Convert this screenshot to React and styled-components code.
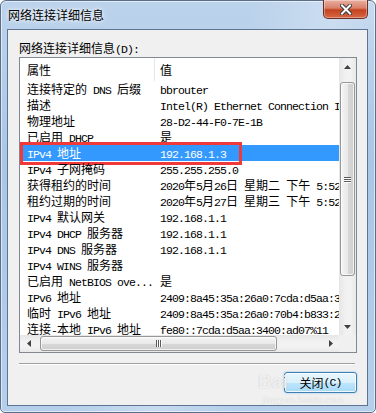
import React from "react";
import styled, { createGlobalStyle } from "styled-components";

const rows = [
  ["连接特定的 DNS 后缀", "bbrouter"],
  ["描述", "Intel(R) Ethernet Connection I219-V"],
  ["物理地址", "28-D2-44-F0-7E-1B"],
  ["已启用 DHCP", "是"],
  ["IPv4 地址", "192.168.1.3"],
  ["IPv4 子网掩码", "255.255.255.0"],
  ["获得租约的时间", "2020年5月26日 星期二 下午 5:52:09"],
  ["租约过期的时间", "2020年5月27日 星期三 下午 5:52:09"],
  ["IPv4 默认网关", "192.168.1.1"],
  ["IPv4 DHCP 服务器", "192.168.1.1"],
  ["IPv4 DNS 服务器", "192.168.1.1"],
  ["IPv4 WINS 服务器", ""],
  ["已启用 NetBIOS ove...", "是"],
  ["IPv6 地址", "2409:8a45:35a:26a0:7cda:d5aa:3400:ad07"],
  ["临时 IPv6 地址", "2409:8a45:35a:26a0:70b4:b833:2c1e:9f04"],
  ["连接-本地 IPv6 地址", "fe80::7cda:d5aa:3400:ad07%11"],
];

const SELECTED = 4;

// SimSun-like text: half-width latin runs, full-width CJK
const Mixed = ({ text }) =>
  text.split(/([\x20-\x7e]+)/).map((part, i) =>
    i % 2 ? <Latin key={i}>{part}</Latin> : part
  );

const Arrow = ({ dir }) => {
  const pts = {
    up: "0,4 3.5,0 7,4",
    down: "0,0 3.5,4 7,0",
    left: "4,0 0,3.5 4,7",
    right: "0,0 4,3.5 0,7",
  }[dir];
  const vertical = dir === "up" || dir === "down";
  return (
    <svg width={vertical ? 7 : 4} height={vertical ? 4 : 7}>
      <polygon points={pts} fill="#404040" />
    </svg>
  );
};

const App = () => {
  return (
    <>
      <GlobalStyle />
      <Window>
        <TitleBar>
          <Title>网络连接详细信息</Title>
          <CloseButton>
            <svg width="12" height="11" viewBox="0 0 12 11">
              <path d="M2 1.5 L10 9.5 M10 1.5 L2 9.5" stroke="#3a3a3a" strokeWidth="4" strokeLinecap="square" />
              <path d="M2 1.5 L10 9.5 M10 1.5 L2 9.5" stroke="#fff" strokeWidth="2" strokeLinecap="square" />
            </svg>
          </CloseButton>
        </TitleBar>
        <Client>
          <Label>
            网络连接详细信息<Latin>(D):</Latin>
          </Label>
          <ListBox>
            <ListArea>
              <Header>
                <HeaderCell $first>属性</HeaderCell>
                <HeaderCell>值</HeaderCell>
              </Header>
              {rows.map(([name, value], i) => (
                <Row key={name} $selected={i === SELECTED}>
                  <Cell $first>
                    <Mixed text={name} />
                  </Cell>
                  <Cell>
                    <Mixed text={value} />
                  </Cell>
                  {i === SELECTED && <Highlight />}
                </Row>
              ))}
            </ListArea>
            <VScroll>
              <ArrowBox>
                <Arrow dir="up" />
              </ArrowBox>
              <Track $vertical>
                <Thumb $vertical>
                  <Grip $vertical>
                    <i />
                    <i />
                    <i />
                  </Grip>
                </Thumb>
              </Track>
              <ArrowBox>
                <Arrow dir="down" />
              </ArrowBox>
            </VScroll>
            <HScroll>
              <ArrowBox>
                <Arrow dir="left" />
              </ArrowBox>
              <Track>
                <Thumb>
                  <Grip>
                    <i />
                    <i />
                    <i />
                  </Grip>
                </Thumb>
              </Track>
              <ArrowBox>
                <Arrow dir="right" />
              </ArrowBox>
            </HScroll>
            <Corner />
          </ListBox>
          <Separator />
          <Footer>
            <Button>
              关闭<Latin>(C)</Latin>
            </Button>
          </Footer>
          <Watermark>
            <WmLogo>Bai</WmLogo>
            <WmUrl>jingyan.baidu.com</WmUrl>
          </Watermark>
        </Client>
      </Window>
    </>
  );
};

export default App;

const GlobalStyle = createGlobalStyle`
  html, body {
    margin: 0;
    padding: 0;
    background: #ffffff;
  }
  body {
    font-family: "Noto Sans CJK SC", "Liberation Sans", sans-serif;
    font-size: 12px;
  }
`;

const Latin = styled.span`
  font-family: "Liberation Mono", "DejaVu Sans Mono", monospace;
  font-size: 11.5px;
  letter-spacing: -0.9px;
`;

const Window = styled.div`
  box-sizing: border-box;
  width: 376px;
  height: 413px;
  border: 1px solid #5b6f8a;
  border-radius: 6px 6px 5px 5px;
  padding: 0 7px 6px 6px;
  display: flex;
  flex-direction: column;
  background:
    linear-gradient(115deg, rgba(255, 255, 255, 0) 45%, rgba(255, 255, 255, 0.25) 60%, rgba(255, 255, 255, 0) 75%),
    linear-gradient(180deg, #bcd3ec 0%, #aac6e6 40%, #b5cfeb 100%);
  box-shadow: inset 0 0 0 1px rgba(255, 255, 255, 0.55);
`;

const TitleBar = styled.div`
  height: 28px;
  display: flex;
  justify-content: space-between;
  align-items: flex-start;
`;

const Title = styled.div`
  padding: 6px 0 0 1px;
  font-size: 12px;
  line-height: 16px;
  color: #000;
  text-shadow: 0 0 6px #fff, 0 0 3px rgba(255, 255, 255, 0.8);
`;

const CloseButton = styled.div`
  box-sizing: border-box;
  width: 45px;
  height: 19px;
  margin-top: -1px;
  border: 1px solid #6b2d22;
  border-top: none;
  border-radius: 0 0 5px 5px;
  display: flex;
  align-items: center;
  justify-content: center;
  background: linear-gradient(180deg, #eab0a2 0%, #d98069 45%, #c5421f 55%, #d66846 100%);
  box-shadow: inset 0 0 0 1px rgba(255, 255, 255, 0.35);
`;

const Client = styled.div`
  position: relative;
  flex: 1;
  box-sizing: border-box;
  border: 1px solid #5d7592;
  background: #f0f0f0;
  padding: 10px 10px 0 11px;
  display: flex;
  flex-direction: column;
`;

const Label = styled.div`
  font-size: 12px;
  line-height: 16px;
  height: 16px;
  color: #000;
`;

const ListBox = styled.div`
  box-sizing: border-box;
  height: 296px;
  margin-top: 1px;
  border: 1px solid #828790;
  background: #fff;
  display: grid;
  grid-template-columns: 1fr 17px;
  grid-template-rows: 1fr 17px;
`;

const ListArea = styled.div`
  overflow: hidden;
  min-width: 0;
`;

const Header = styled.div`
  display: grid;
  grid-template-columns: 135px 1fr;
  height: 23px;
  background: #fff;
`;

const HeaderCell = styled.div`
  box-sizing: border-box;
  padding-left: ${(p) => (p.$first ? "7px" : "5px")};
  line-height: 23px;
  font-size: 12px;
  color: #000;
  border-right: ${(p) => (p.$first ? "1px solid #e3e6eb" : "none")};
`;

const Row = styled.div`
  position: relative;
  display: grid;
  grid-template-columns: 134px 1fr;
  height: 16px;
  line-height: 16px;
  font-size: 12px;
  white-space: nowrap;
  background: ${(p) => (p.$selected ? "#3399ff" : "transparent")};
  color: ${(p) => (p.$selected ? "#ffffff" : "#000000")};
`;

const Cell = styled.div`
  overflow: hidden;
  padding-left: ${(p) => (p.$first ? "7px" : "6px")};
`;

const Highlight = styled.div`
  position: absolute;
  left: 0;
  top: -3px;
  width: 222px;
  height: 23px;
  box-sizing: border-box;
  border: 3px solid #f03a3a;
  pointer-events: none;
`;

const VScroll = styled.div`
  grid-row: 1;
  grid-column: 2;
  display: flex;
  flex-direction: column;
  background: linear-gradient(90deg, #e6e6e6, #f2f2f2 40%, #f2f2f2 70%, #e8e8e8);
`;

const HScroll = styled.div`
  grid-row: 2;
  grid-column: 1;
  display: flex;
  background: linear-gradient(180deg, #e6e6e6, #f2f2f2 40%, #f2f2f2 70%, #e8e8e8);
`;

const Corner = styled.div`
  grid-row: 2;
  grid-column: 2;
  background: #f0f0f0;
`;

const ArrowBox = styled.div`
  flex: 0 0 17px;
  display: flex;
  align-items: center;
  justify-content: center;
`;

const Track = styled.div`
  flex: 1;
  display: flex;
  flex-direction: ${(p) => (p.$vertical ? "column" : "row")};
  padding: ${(p) => (p.$vertical ? "7px 0 0" : "0 0 0 3px")};
`;

const Thumb = styled.div`
  box-sizing: border-box;
  ${(p) =>
    p.$vertical
      ? "height: 194px; margin: 0 1px;"
      : "width: 237px; margin: 1px 0;"}
  border: 1px solid #979797;
  border-radius: 3px;
  display: flex;
  align-items: center;
  justify-content: center;
  background: ${(p) =>
    p.$vertical
      ? "linear-gradient(90deg, #f4f4f4 0%, #e9e9e9 50%, #d8d8d8 51%, #cfcfcf 100%)"
      : "linear-gradient(180deg, #f4f4f4 0%, #e9e9e9 50%, #d8d8d8 51%, #cfcfcf 100%)"};
  box-shadow: inset 0 0 0 1px rgba(255, 255, 255, 0.7);
`;

const Grip = styled.div`
  display: flex;
  flex-direction: ${(p) => (p.$vertical ? "column" : "row")};
  gap: 1px;

  i {
    display: block;
    ${(p) => (p.$vertical ? "width: 7px; height: 1px;" : "width: 1px; height: 7px;")}
    background: #5a5a5a;
    box-shadow: ${(p) => (p.$vertical ? "0 1px 0 #fff" : "1px 0 0 #fff")};
  }
`;

const Separator = styled.div`
  margin-top: 10px;
  margin-right: 2px;
  border-top: 1px solid #a0a0a0;
  border-bottom: 1px solid #ffffff;
`;

const Footer = styled.div`
  display: flex;
  justify-content: flex-end;
  margin-top: 7px;
`;

const Button = styled.div`
  box-sizing: border-box;
  width: 73px;
  height: 21px;
  border: 1px solid #3c7fb1;
  border-radius: 3px;
  display: flex;
  align-items: center;
  justify-content: center;
  font-size: 12px;
  color: #000;
  background: linear-gradient(180deg, #eaf6fd 0%, #d9f0fc 50%, #bee6fd 51%, #a7d9f5 100%);
  box-shadow: inset 0 0 0 1px rgba(255, 255, 255, 0.8), 0 0 2px rgba(60, 160, 230, 0.6);
`;

const Watermark = styled.div`
  position: absolute;
  left: 250px;
  top: 341px;
  display: flex;
  flex-direction: column;
  align-items: flex-start;
  pointer-events: none;
`;

const WmLogo = styled.div`
  font-family: "Liberation Sans", sans-serif;
  font-weight: bold;
  font-size: 19px;
  line-height: 22px;
  color: rgba(255, 255, 255, 0.8);
  text-shadow: 0 0 1px rgba(0, 0, 0, 0.25);
`;

const WmUrl = styled.div`
  margin-left: 4px;
  font-family: "Liberation Serif", serif;
  font-size: 11px;
  line-height: 13px;
  color: rgba(255, 255, 255, 0.8);
  text-shadow: 0 0 1px rgba(0, 0, 0, 0.2);
`;
